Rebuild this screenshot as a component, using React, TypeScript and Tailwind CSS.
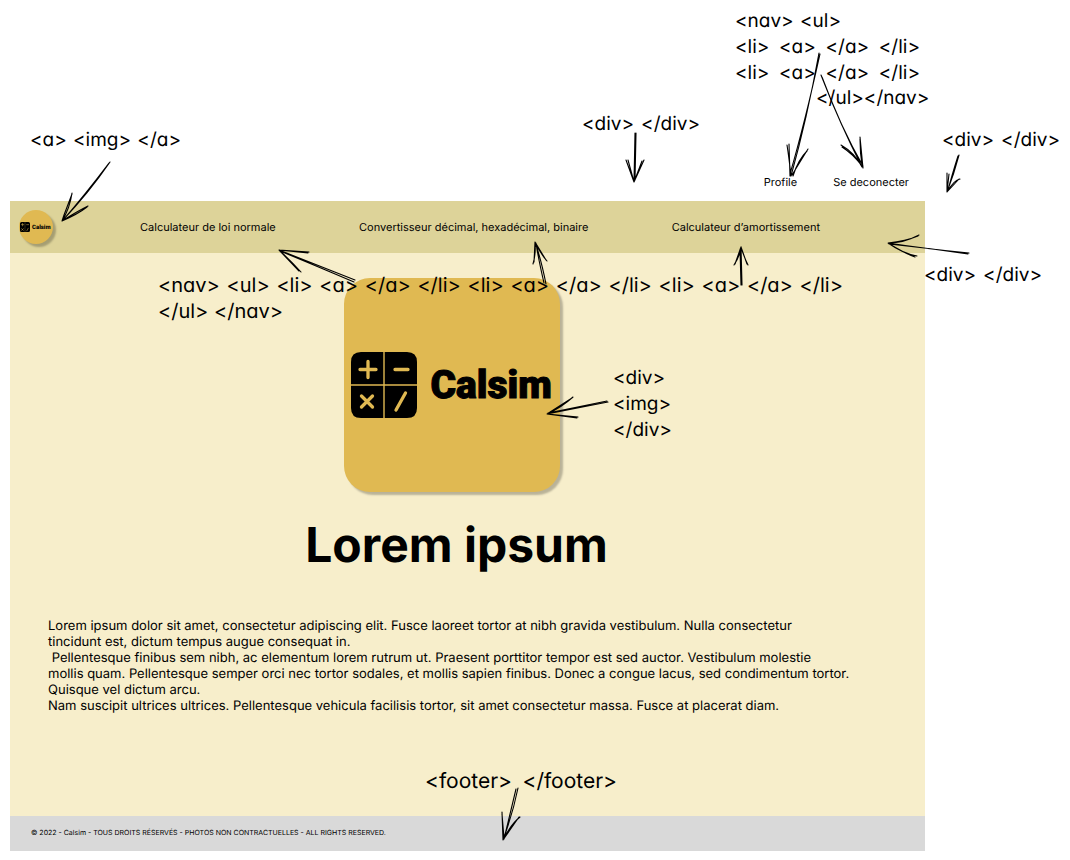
const bodyLines = [
  'Lorem ipsum dolor sit amet, consectetur adipiscing elit. Fusce laoreet tortor at nibh gravida vestibulum. Nulla consectetur',
  'tincidunt est, dictum tempus augue consequat in.',
  ' Pellentesque finibus sem nibh, ac elementum lorem rutrum ut. Praesent porttitor tempor est sed auctor. Vestibulum molestie',
  'mollis quam. Pellentesque semper orci nec tortor sodales, et mollis sapien finibus. Donec a congue lacus, sed condimentum tortor.',
  'Quisque vel dictum arcu.',
  'Nam suscipit ultrices ultrices. Pellentesque vehicula facilisis tortor, sit amet consectetur massa. Fusce at placerat diam.',
];

// Each arrow: a doubled shaft and two head strokes, as if sketched with a pen.
const arrows = [
  'M110 162 Q88 194 62 221 M109 163 Q84 196 63 220 M72 193 Q70 208 62 221 L64 215 L72 194 M88 206 Q76 212 62 221 Q78 214 87 207',
  'M819 53 Q807 119 791 176 M820 54 Q805 122 790 174 M787 145 Q789 158 791 176 M789 144 L790 176 M808 149 L792 175 M807 151 Q798 160 793 176',
  'M821 75 Q840 124 862 167 M822 77 Q841 128 863 166 M841 145 Q855 153 862 167 M842 147 Q853 154 862 166 M860 137 L863 168 M860 139 Q860 153 862 165',
  'M635 133 L634 182 M636 133 L635 180 M626 160 L634 182 L628 160 M644 160 L634 182 L642 161',
  'M959 155 Q954 174 947 192 M958 156 Q952 175 948 190 M947 173 L947 192 L949 174 M960 179 Q954 180 947 192 L959 179',
  'M969 253 Q927 249 888 243 M968 254 Q929 248 889 244 M919 235 Q904 243 888 243 Q906 241 918 236 M917 256 Q904 254 888 243 Q904 253 915 257',
  'M355 280 Q317 265 279 250 M354 282 Q314 265 280 251 M309 252 L279 250 L308 253 M301 272 Q292 262 279 250 L299 271',
  'M546 284 Q541 259 535 242 M544 283 Q538 257 536 243 M533 264 Q536 254 535 242 L534 262 M547 261 Q540 253 535 242 L546 260',
  'M742 285 L741 247 M741 285 L740 249 M734 265 Q740 256 741 247 L735 264 M748 265 Q744 257 741 247 L747 264',
  'M608 402 L547 414 M607 401 Q577 407 548 413 M573 397 Q562 407 547 414 L572 398 M578 417 L547 414 L577 418',
  'M518 788 Q513 813 503 840 M516 789 L504 839 M502 812 L503 840 L504 838 L502 814 M520 817 Q511 824 503 840 L519 817',
];

// A handwritten-style note pinned on the canvas; tags on a line spread over its width.
function Note({ className, lines }: { className: string; lines: { text: string; width?: string }[] }) {
  return (
    <div
      className={`absolute leading-[26px] text-black [font-feature-settings:'cv11','calt'_0] ${className}`}
    >
      {lines.map(({ text, width = 'gap-[6px]' }, i) => (
        <p key={i} className={`flex justify-between whitespace-nowrap ${width}`}>
          {text.split(' ').map((tag, j) => (
            <span key={j}>{tag}</span>
          ))}
        </p>
      ))}
    </div>
  );
}

function CalcIcon({ className }: { className: string }) {
  return (
    <svg viewBox="0 0 66 66" className={className} aria-hidden="true">
      <path d="M10 0H32.300V32.300H0V10Q0 0 10 0ZM33.700 0H56Q66 0 66 10V32.300H33.700ZM0 33.700H32.300V66H10Q0 66 0 56ZM33.700 33.700H66V56Q66 66 56 66H33.700Z" />
      <path
        d="M9 17.500H25M17 9.500V25.500M44 17.500H57M10.500 44L21.500 55M21.500 44L10.500 55M54.500 41L45 58"
        fill="none"
        stroke="#e0b952"
        strokeWidth="3.300"
        strokeLinecap="round"
      />
    </svg>
  );
}

export default function App() {
  return (
    <div className="relative bg-white pt-[170px] pb-[9px] pl-[10px] pr-[145px] font-['Inter',sans-serif] text-black [text-rendering:geometricPrecision]">
      <nav className="h-[31px] pr-4 pt-1">
        <ul className="flex justify-end gap-9 text-[11px] leading-4">
          <li><a href="#profile">Profile</a></li>
          <li><a href="#logout">Se deconecter</a></li>
        </ul>
      </nav>

      <header className="flex h-[52px] items-center bg-[#ddd399] pl-[9px]">
        <a
          href="#home"
          aria-label="Calsim"
          className="flex size-[34px] shrink-0 items-center gap-[2px] rounded-full bg-[#e0b952] pl-px shadow-[3px_3px_2px_rgba(0,0,0,0.25)]"
        >
          <CalcIcon className="size-[10px] shrink-0" />
          <span className="font-['Roboto',sans-serif] text-[6px] font-black">Calsim</span>
        </a>
        <nav className="ml-[87px] mr-[105px] grow">
          <ul className="flex justify-between text-[11px] leading-4">
            <li><a href="#normal">Calculateur de loi normale</a></li>
            <li><a href="#converter">Convertisseur décimal, hexadécimal, binaire</a></li>
            <li><a href="#depreciation">Calculateur d’amortissement</a></li>
          </ul>
        </nav>
      </header>

      <main className="flex flex-col items-center bg-[#f7eecb] pt-[25px] pb-[102px]">
        <div className="mr-8 flex h-[214px] w-[216px] items-center gap-[14px] rounded-[26px] bg-[#e0b952] pl-[7px] shadow-[3px_3px_2px_rgba(0,0,0,0.25)]">
          <CalcIcon className="size-[66px] shrink-0" />
          <span className="font-['Roboto',sans-serif] text-[39px] font-black leading-none [-webkit-text-stroke:1px_black]">Calsim</span>
        </div>
        <h1 className="mr-[22px] mt-6 text-5xl font-bold leading-[58px]">Lorem ipsum</h1>
        <div className="mt-11 self-stretch whitespace-pre pl-[38px] text-[13px] leading-4">
          {bodyLines.map((line) => (
            <p key={line}>{line}</p>
          ))}
        </div>
      </main>

      <footer className="h-[35px] bg-[#d9d9d9] pl-[21px] pt-3 text-[7px] leading-[10px]">
        © 2022 - Calsim - TOUS DROITS RÉSERVÉS - PHOTOS NON CONTRACTUELLES - ALL RIGHTS RESERVED.
      </footer>

      <Note className="left-[30px] top-[127px] text-[19px]" lines={[{ text: '<a> <img> </a>', width: 'w-[151px]' }]} />
      <Note className="left-[582px] top-[111px] text-[19px]" lines={[{ text: '<div> </div>', width: 'w-[118px]' }]} />
      <Note
        className="left-[735px] top-[8px] text-[19px]"
        lines={[
          { text: '<nav> <ul>', width: 'w-[106px]' },
          { text: '<li> <a> </a> </li>', width: 'w-[185px]' },
          { text: '<li> <a> </a> </li>', width: 'w-[185px]' },
        ]}
      />
      <Note className="left-[816px] top-[85px] text-[19px]" lines={[{ text: '</ul></nav>' }]} />
      <Note className="left-[942px] top-[127px] text-[19px]" lines={[{ text: '<div> </div>', width: 'w-[118px]' }]} />
      <Note className="left-[924px] top-[262px] text-[19px]" lines={[{ text: '<div> </div>', width: 'w-[118px]' }]} />
      <Note
        className="left-[158px] top-[272px] text-[20px]"
        lines={[
          { text: '<nav> <ul> <li> <a> </a> </li> <li> <a> </a> </li> <li> <a> </a> </li>', width: 'w-[685px]' },
          { text: '</ul> </nav>', width: 'w-[125px]' },
        ]}
      />
      <Note
        className="left-[613px] top-[365px] text-[19px]"
        lines={[{ text: '<div>' }, { text: '<img>' }, { text: '</div>' }]}
      />
      <Note className="left-[425px] top-[769px] text-[21px]" lines={[{ text: '<footer> </footer>', width: 'w-[192px]' }]} />

      <svg
        width="1070"
        height="860"
        viewBox="0 0 1070 860"
        className="pointer-events-none absolute left-0 top-0"
        fill="none"
        stroke="#000"
        strokeWidth="1.100"
        strokeLinecap="round"
        aria-hidden="true"
      >
        {arrows.map((d) => (
          <path key={d} d={d} />
        ))}
      </svg>
    </div>
  );
}
